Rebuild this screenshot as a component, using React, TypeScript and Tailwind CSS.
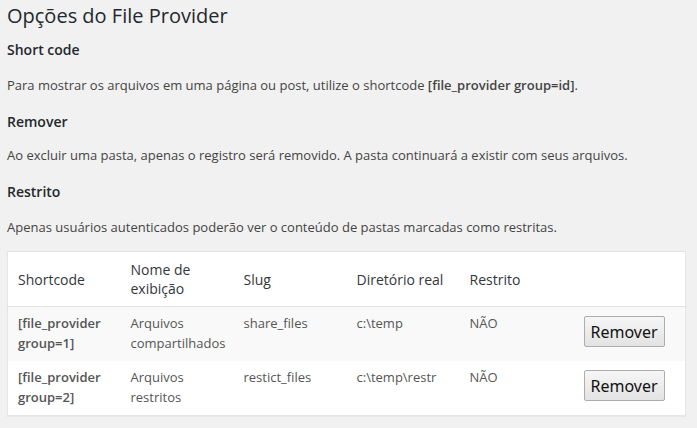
import React from "react"

const rows = [
  { code: "[file_provider group=1]", name: "Arquivos compartilhados", slug: "share_files", dir: "c:\\temp", restricted: "NÃO" },
  { code: "[file_provider group=2]", name: "Arquivos restritos", slug: "restict_files", dir: "c:\\temp\\restr", restricted: "NÃO" },
]

export default function App() {
  return (
    <div className="h-[428px] w-full overflow-hidden bg-[#f1f1f1] pl-[7px] pr-[11px] font-['Open_Sans',sans-serif] text-[13px] text-[#444]">
      {/* Page title */}
      <h2 className="flex h-[31px] items-center text-[20px] font-normal leading-[28px] text-[#23282d]">Opções do File Provider</h2>

      {/* Help sections */}
      <h4 className="flex h-[36px] items-center text-[14px] font-semibold text-[#23282d]">Short code</h4>
      <p className="flex h-[37px] items-center">
        Para mostrar os arquivos em uma página ou post, utilize o shortcode&nbsp;<strong className="font-semibold">[file_provider group=id]</strong>.
      </p>
      <h4 className="flex h-[34px] items-center text-[14px] font-semibold text-[#23282d]">Remover</h4>
      <p className="flex h-[36px] items-center">
        Ao excluir uma pasta, apenas o registro será removido. A pasta continuará a existir com seus arquivos.
      </p>
      <h4 className="flex h-[34px] items-center text-[14px] font-semibold text-[#23282d]">Restrito</h4>
      <p className="flex h-[40px] items-center">
        Apenas usuários autenticados poderão ver o conteúdo de pastas marcadas como restritas.
      </p>

      {/* Folder table */}
      <table className="mt-[3px] w-full table-fixed border-collapse border border-[#e5e5e5] bg-white shadow-[0_1px_1px_rgba(0,0,0,0.04)]">
        <colgroup>
          <col className="w-[113px]" />
          <col className="w-[113px]" />
          <col className="w-[113px]" />
          <col className="w-[113px]" />
          <col className="w-[113px]" />
          <col />
        </colgroup>
        <thead>
          <tr className="border-b border-[#e1e1e1]">
            {["Shortcode", "Nome de exibição", "Slug", "Diretório real", "Restrito", ""].map((h, i) => (
              <th key={i} className="px-[10px] py-[8px] text-left align-middle text-[14px] font-normal leading-[19px] text-[#32373c]">
                {h}
              </th>
            ))}
          </tr>
        </thead>
        <tbody>
          {rows.map((r, i) => (
            <tr key={i} className={i % 2 === 0 ? "bg-[#f9f9f9]" : "bg-white"}>
              <td className="px-[10px] pt-[7px] pb-[8px] align-top leading-[19.5px] font-semibold text-[#555]">{r.code}</td>
              <td className="px-[10px] pt-[7px] pb-[8px] align-top leading-[19.5px] text-[#555]">{r.name}</td>
              <td className="px-[10px] pt-[7px] pb-[8px] align-top leading-[19.5px] text-[#555]">{r.slug}</td>
              <td className="px-[10px] pt-[7px] pb-[8px] align-top leading-[19.5px] text-[#555]">{r.dir}</td>
              <td className="px-[10px] pt-[7px] pb-[8px] align-top leading-[19.5px] text-[#555]">{r.restricted}</td>
              <td className="pt-[9px] pb-[8px] pl-[11px] align-top">
                <button className="h-[31px] w-[81px] rounded-[2px] border border-[#adadad] bg-gradient-to-b from-[#f6f6f6] to-[#e3e3e3] font-['Noto_Sans',sans-serif] text-[16px] text-[#111]">
                  Remover
                </button>
              </td>
            </tr>
          ))}
        </tbody>
      </table>
    </div>
  )
}
